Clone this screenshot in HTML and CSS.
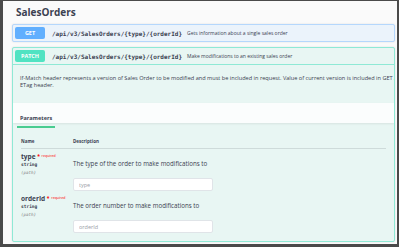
FILE: index.html
```html
<!DOCTYPE html>
<html lang="en">
<head>
  <meta charset="UTF-8">
  <title>SalesOrders</title>
  <link rel="stylesheet" href="styles.css">
</head>
<body>
  <div class="frame">
    <h4 class="tag">SalesOrders</h4>

    <div class="opblock get">
      <div class="summary">
        <span class="method">GET</span>
        <span class="path">/api/v3/SalesOrders/{type}/{orderId}</span>
        <span class="desc">Gets information about a single sales order</span>
      </div>
    </div>

    <div class="opblock patch">
      <div class="summary">
        <span class="method">PATCH</span>
        <span class="path">/api/v3/SalesOrders/{type}/{orderId}</span>
        <span class="desc">Make modifications to an existing sales order</span>
      </div>
      <div class="note">
        If-Match header represents a version of Sales Order to be modified and must be included in request. Value of current version is included in GET /salesorders response in the<br>ETag header.
      </div>
      <div class="section-head">
        <span class="tab">Parameters</span>
      </div>
      <div class="params">
        <div class="param-row head">
          <div class="col-name">Name</div>
          <div class="col-desc">Description</div>
        </div>
        <div class="param-row">
          <div class="col-name">
            <div class="pname">type <span class="star">*</span> <sup class="req">required</sup></div>
            <div class="ptype">string</div>
            <div class="pin">(path)</div>
          </div>
          <div class="col-desc">
            <p>The type of the order to make modifications to</p>
            <input type="text" placeholder="type">
          </div>
        </div>
        <div class="param-row">
          <div class="col-name">
            <div class="pname">orderId <span class="star">*</span> <sup class="req">required</sup></div>
            <div class="ptype">string</div>
            <div class="pin">(path)</div>
          </div>
          <div class="col-desc">
            <p>The order number to make modifications to</p>
            <input type="text" placeholder="orderId">
          </div>
        </div>
      </div>
    </div>
  </div>
</body>
</html>
```

FILE: styles.css
```css
html, body {
  margin: 0;
  height: 100%;
  overflow: hidden;
}

body {
  font-family: "Open Sans", sans-serif;
  color: #3b4151;
  background: #4a4a4a;
}

.frame {
  box-sizing: border-box;
  height: 243px;
  margin: 1px 2px 3px 3px;
  background: #fafafa;
  padding: 0 2px 2px 9px;
  display: flex;
  flex-direction: column;
  overflow: hidden;
}

.tag {
  margin: 0;
  padding: 4px 0 0 4px;
  height: 20px;
  box-sizing: border-box;
  font-size: 10px;
  font-weight: 700;
  line-height: 14px;
  flex-shrink: 0;
}

.opblock {
  border: 1px solid;
  border-radius: 2px;
  margin-top: 3px;
  box-shadow: 0 0 2px rgba(0, 0, 0, 0.12);
  flex-shrink: 0;
}

.opblock.get {
  background: #ebf3fb;
  border-color: #b5d7fc;
}

.opblock.patch {
  background: #e8f6f3;
  border-color: #8fe9d5;
  margin-top: 5px;
  flex: 1;
  overflow: hidden;
}

.summary {
  display: flex;
  align-items: center;
  height: 16px;
  padding: 0 2px;
}

.method {
  width: 30px;
  height: 12px;
  border-radius: 2px;
  color: #fff;
  font-size: 5.5px;
  font-weight: 700;
  line-height: 12px;
  text-align: center;
  flex-shrink: 0;
}

.get .method { background: #61affe; }
.patch .method { background: #50e3c2; }

.patch .summary {
  border-bottom: 1px solid #8fe9d5;
}

.path {
  margin-left: 7px;
  font-family: "DejaVu Sans Mono", monospace;
  font-size: 6px;
  font-weight: 700;
  white-space: nowrap;
}

.desc {
  margin-left: 5px;
  font-size: 5px;
  white-space: nowrap;
}

.note {
  box-sizing: border-box;
  height: 38px;
  padding: 10px 0 0 7px;
  white-space: nowrap;
  font-size: 5.6px;
  line-height: 7px;
}

.section-head {
  background: rgba(255, 255, 255, 0.8);
  height: 20px;
  padding-left: 7px;
  box-shadow: 0 1px 2px rgba(0, 0, 0, 0.08);
}

.tab {
  display: inline-block;
  height: 18px;
  font-size: 5.5px;
  font-weight: 700;
  line-height: 20px;
  padding: 0 3px;
  margin-left: -3px;
  border-bottom: 2px solid #49cc90;
}

.params {
  padding: 0 8px;
}

.param-row {
  display: flex;
}

.param-row.head {
  margin-top: 15px;
  padding-bottom: 4px;
  border-bottom: 1px solid rgba(59, 65, 81, 0.15);
  font-size: 4.5px;
  font-weight: 700;
  line-height: 6px;
}

.col-name {
  width: 52px;
  flex-shrink: 0;
}

.col-desc {
  flex: 1;
}

.param-row + .param-row {
  margin-top: 4px;
}

.pname {
  font-size: 6.5px;
  font-weight: 700;
  line-height: 8px;
  white-space: nowrap;
}

.star {
  color: #f00;
  font-size: 5px;
  vertical-align: top;
  line-height: 6px;
}

.req {
  color: #f00;
  font-size: 3.5px;
  font-weight: 400;
  vertical-align: top;
  line-height: 5px;
}

.ptype {
  font-family: "DejaVu Sans Mono", monospace;
  font-size: 4.5px;
  font-weight: 700;
  line-height: 8px;
}

.pin {
  font-family: "DejaVu Sans Mono", monospace;
  font-size: 4.2px;
  font-style: italic;
  color: #808080;
  line-height: 8px;
}

.col-desc p {
  margin: 7px 0 0;
  font-size: 6.2px;
  line-height: 8px;
}

.col-desc input {
  display: block;
  box-sizing: border-box;
  margin-top: 10px;
  width: 140px;
  height: 13px;
  border: 1px solid #e0e4e8;
  border-radius: 2px;
  padding: 0 5px;
  background: #fff;
  font-family: "Open Sans", sans-serif;
  font-size: 5.5px;
  color: #3b4151;
}

.col-desc input::placeholder {
  color: #9a9ea6;
}
```
